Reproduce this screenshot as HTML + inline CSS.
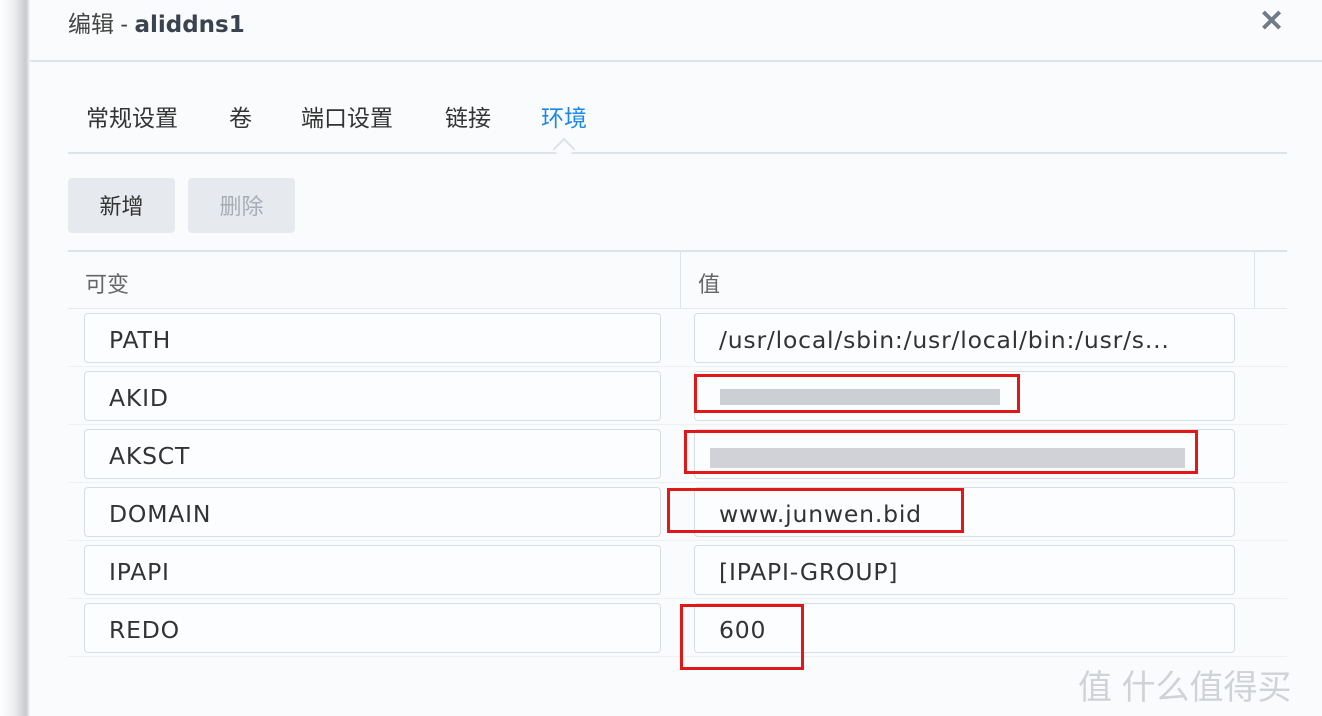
<!DOCTYPE html>
<html><head><meta charset="utf-8"><style>
*{margin:0;padding:0;box-sizing:border-box}
body{width:1322px;height:716px;overflow:hidden;background:#fafbfc;font-family:"Liberation Sans","Noto Sans CJK SC",sans-serif;position:relative;color:#333}
.a{position:absolute}
.shadow{left:0;top:0;width:30px;height:716px;background:linear-gradient(90deg,#fff 0,#eceef0 14px,#c8cacd 26px,#e9ebed 29px,#fafbfc 30px)}
.line{background:#dde3ea;height:2px}
.inp{border:1px solid #d7dde4;border-radius:4px;background:#fcfdfe;height:50px;font-family:"DejaVu Sans",sans-serif;font-size:23.5px;color:#333;padding-left:24px;line-height:52px;letter-spacing:0.8px;overflow:hidden}
.tab{top:99px;font-size:23px;color:#333}
.btn{top:178px;width:107px;height:55px;border-radius:4px;background:#e6e9ee;font-size:22px;text-align:center;line-height:57px}
.red{border:3px solid #e01818}
.blk{background:#b8bcc2;height:16px}
</style></head><body>
<div class="a shadow"></div>
<div class="a" style="left:68px;top:5px;font-size:23px;color:#444">编辑 - <b style="font-family:'DejaVu Sans',sans-serif;color:#3b4350;font-size:23px">aliddns1</b></div>
<div class="a" style="left:1259px;top:4px;font-size:30px;color:#707b88;font-weight:bold">✕</div>
<div class="a line" style="left:30px;top:60px;width:1292px"></div>
<div class="a tab" style="left:86px">常规设置</div>
<div class="a tab" style="left:229px">卷</div>
<div class="a tab" style="left:301px">端口设置</div>
<div class="a tab" style="left:445px">链接</div>
<div class="a tab" style="left:541px;color:#1e88e5">环境</div>
<div class="a line" style="left:68px;top:152px;width:1219px"></div>
<div class="a" style="left:556px;top:141px;width:16px;height:16px;background:#fafbfc;border-left:2px solid #dde3ea;border-top:2px solid #dde3ea;transform:rotate(45deg)"></div>
<div class="a btn" style="left:68px">新增</div>
<div class="a btn" style="left:188px;color:#a6adb5">删除</div>
<div class="a line" style="left:68px;top:250px;width:1219px"></div>
<div class="a" style="left:85px;top:267px;font-size:22px;color:#666">可变</div>
<div class="a" style="left:698px;top:267px;font-size:22px;color:#666">值</div>
<div class="a" style="left:680px;top:252px;width:1px;height:56px;background:#dde3ea"></div>
<div class="a" style="left:1254px;top:252px;width:1px;height:56px;background:#dde3ea"></div>
<div class="a" style="left:68px;top:308px;width:1219px;height:1px;background:#e6eaef"></div>

<div class="a inp" style="left:84px;top:313px;width:577px">PATH</div>
<div class="a inp" style="left:694px;top:313px;width:541px;white-space:nowrap">/usr/local/sbin:/usr/local/bin:/usr/s...</div>
<div class="a" style="left:68px;top:366px;width:1219px;height:1px;background:#eef1f4"></div>
<div class="a inp" style="left:84px;top:371px;width:577px">AKID</div>
<div class="a inp" style="left:694px;top:371px;width:541px"></div>
<div class="a" style="left:68px;top:424px;width:1219px;height:1px;background:#eef1f4"></div>
<div class="a inp" style="left:84px;top:429px;width:577px">AKSCT</div>
<div class="a inp" style="left:694px;top:429px;width:541px"></div>
<div class="a" style="left:68px;top:482px;width:1219px;height:1px;background:#eef1f4"></div>
<div class="a inp" style="left:84px;top:487px;width:577px">DOMAIN</div>
<div class="a inp" style="left:694px;top:487px;width:541px">www.junwen.bid</div>
<div class="a" style="left:68px;top:540px;width:1219px;height:1px;background:#eef1f4"></div>
<div class="a inp" style="left:84px;top:545px;width:577px">IPAPI</div>
<div class="a inp" style="left:694px;top:545px;width:541px">[IPAPI-GROUP]</div>
<div class="a" style="left:68px;top:598px;width:1219px;height:1px;background:#eef1f4"></div>
<div class="a inp" style="left:84px;top:603px;width:577px">REDO</div>
<div class="a inp" style="left:694px;top:603px;width:541px">600</div>
<div class="a" style="left:68px;top:656px;width:1219px;height:1px;background:#eef1f4"></div>

<div class="a blk" style="left:720px;top:389px;width:280px;opacity:.7"></div>
<div class="a blk" style="left:710px;top:448px;width:475px;height:20px;opacity:.65"></div>
<div class="a red" style="left:694px;top:374px;width:326px;height:39px"></div>
<div class="a red" style="left:684px;top:430px;width:514px;height:44px"></div>
<div class="a red" style="left:667px;top:488px;width:297px;height:45px"></div>
<div class="a red" style="left:680px;top:604px;width:124px;height:66px"></div>
<div class="a" style="left:1078px;top:660px;font-size:34px;color:#cfd2d6">值 什么值得买</div>
</body></html>
